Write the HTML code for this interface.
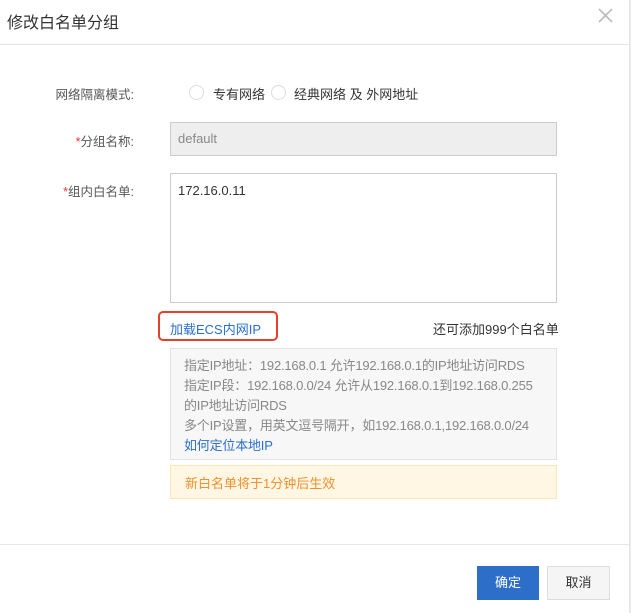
<!DOCTYPE html>
<html><head><meta charset="utf-8"><style>
*{margin:0;padding:0;box-sizing:border-box}
body{width:631px;height:613px;background:#fff;font-family:"Liberation Sans","Noto Sans CJK SC",sans-serif;position:relative;overflow:hidden;color:#333}
.a{position:absolute}
.lbl{font-size:12.5px;color:#555;text-align:right;width:134px;left:0}
.req{color:#e4393c}
</style></head><body>
<div class="a" style="left:7px;top:9px;font-size:16px;color:#333">修改白名单分组</div>
<svg class="a" style="left:598px;top:8px" width="15" height="15" viewBox="0 0 15 15"><path d="M1 1L14 14M14 1L1 14" stroke="#bbb" stroke-width="1.6"/></svg>
<div class="a" style="left:0;top:44px;width:631px;height:1px;background:#e3e3e3"></div>
<div class="a" style="right:0;top:0;width:2px;height:613px;background:#e8e8e8"></div>

<div class="a lbl" style="top:84px">网络隔离模式:</div>
<div class="a" style="left:189px;top:85px;width:15px;height:15px;border:1px solid #ddd;border-radius:50%"></div>
<div class="a" style="left:213px;top:84px;font-size:13px">专有网络</div>
<div class="a" style="left:271px;top:85px;width:15px;height:15px;border:1px solid #ddd;border-radius:50%"></div>
<div class="a" style="left:294px;top:84px;font-size:13px">经典网络 及 外网地址</div>

<div class="a lbl" style="top:131px"><span class="req">*</span>分组名称:</div>
<div class="a" style="left:170px;top:122px;width:387px;height:34px;background:#eee;border:1px solid #ccc;font-size:13px;color:#888;padding:8px 7px">default</div>

<div class="a lbl" style="top:181px"><span class="req">*</span>组内白名单:</div>
<div class="a" style="left:170px;top:173px;width:387px;height:130px;border:1px solid #ccc;font-size:13px;color:#333;padding:9px 7px">172.16.0.11</div>

<div class="a" style="left:158px;top:311px;width:120px;height:30px;border:2px solid #e4412c;border-radius:5px"></div>
<div class="a" style="left:170px;top:319px;font-size:13px;color:#2a6fd1">加载ECS内网IP</div>
<div class="a" style="left:433px;top:319px;font-size:13px;color:#333">还可添加999个白名单</div>

<div class="a" style="left:170px;top:348px;width:387px;height:112px;background:#f7f7f7;border:1px solid #e3e3e3;font-size:13px;color:#888;padding:0 13px;line-height:20px;white-space:nowrap;letter-spacing:-0.2px">
<div style="height:7px"></div>指定IP地址：192.168.0.1 允许192.168.0.1的IP地址访问RDS<br>指定IP段：192.168.0.0/24 允许从192.168.0.1到192.168.0.255<br>的IP地址访问RDS<br>多个IP设置，用英文逗号隔开，如192.168.0.1,192.168.0.0/24<br><span style="color:#2a6fd1">如何定位本地IP</span></div>

<div class="a" style="left:170px;top:465px;width:387px;height:34px;background:#fff6e3;border:1px solid #fbe6b8;font-size:13px;color:#f0902e;padding:7px 14px">新白名单将于1分钟后生效</div>

<div class="a" style="left:0;top:544px;width:631px;height:1px;background:#e6e6e6"></div>
<div class="a" style="left:477px;top:566px;width:62px;height:34px;background:#2d6fc8;color:#fff;font-size:13px;text-align:center;line-height:34px">确定</div>
<div class="a" style="left:547px;top:566px;width:63px;height:34px;background:#f5f5f5;border:1px solid #ddd;color:#333;font-size:13px;text-align:center;line-height:32px">取消</div>
</body></html>
